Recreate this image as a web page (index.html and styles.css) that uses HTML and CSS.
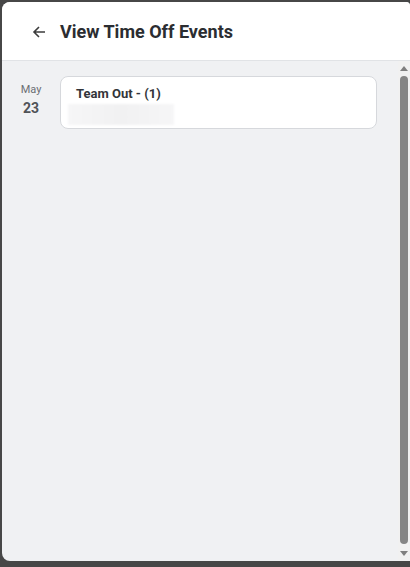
FILE: index.html
```html
<!DOCTYPE html>
<html>
<head>
<meta charset="utf-8">
<link rel="stylesheet" href="styles.css">
</head>
<body>
<div class="panel">
  <header class="header">
    <svg class="back" width="16" height="16" viewBox="0 0 16 16"><path d="M14 8H3M8 3L3 8l5 5" fill="none" stroke="#3c3c3c" stroke-width="1.6"/></svg>
    <h1 class="title">View Time Off Events</h1>
  </header>
  <div class="body">
    <div class="content">
      <div class="row">
        <div class="date">
          <div class="month">May</div>
          <div class="day">23</div>
        </div>
        <div class="card">
          <div class="card-title">Team Out - (1)</div>
          <div class="blur"></div>
        </div>
      </div>
    </div>
    <div class="scrollbar">
      <div class="arrow up"></div>
      <div class="thumb"></div>
      <div class="arrow down"></div>
    </div>
  </div>
</div>
</body>
</html>
```
FILE: styles.css
```css
html, body { margin: 0; padding: 0; }
body {
  width: 410px;
  height: 567px;
  background: #474747;
  font-family: Roboto, "Liberation Sans", sans-serif;
  overflow: hidden;
}
.panel {
  margin: 2px 0 0 2px;
  width: 408px;
  height: 559px;
  border-radius: 8px 4px 0 8px;
  overflow: hidden;
  display: flex;
  flex-direction: column;
  background: #f0f1f3;
}
.header {
  flex: none;
  background: #fff;
  border-bottom: 1px solid #e1e3e6;
  display: flex;
  align-items: center;
  padding-left: 29px;
  box-sizing: border-box;
  height: 59px;
}
.back { flex: none; margin-top: 1px; }
.title {
  margin: 0 0 0 13px;
  font-size: 18px;
  font-weight: 700;
  color: #2b2d31;
  letter-spacing: 0;
}
.body {
  flex: 1;
  display: flex;
}
.content {
  flex: 1;
  padding: 15px 21px 0 0;
}
.row { display: flex; }
.date {
  width: 58px;
  flex: none;
  text-align: center;
  padding-top: 7px;
}
.month {
  font-size: 11px;
  color: #6b6e73;
  line-height: 13px;
}
.day {
  font-size: 14px;
  font-weight: 700;
  color: #505357;
  line-height: 18px;
  margin-top: 3px;
}
.card {
  flex: 1;
  height: 53px;
  box-sizing: border-box;
  background: #fff;
  border: 1px solid #d6d8dc;
  border-radius: 8px;
  padding: 9px 0 0 15px;
}
.card-title {
  font-size: 13px;
  font-weight: 700;
  color: #333539;
  line-height: 15px;
}
.blur {
  margin: 3px 0 0 -8px;
  width: 106px;
  height: 21px;
  background: linear-gradient(90deg, #f6f6f7, #f1f1f2 50%, #f6f6f7);
  filter: blur(1px);
}
.scrollbar {
  width: 12px;
  flex: none;
  background: #f1f1f1;
  display: flex;
  flex-direction: column;
  align-items: center;
}
.arrow {
  width: 0; height: 0;
  border-left: 4px solid transparent;
  border-right: 4px solid transparent;
  margin: 5px 0;
}
.up { border-bottom: 5px solid #7f7f7f; }
.down { border-top: 5px solid #7f7f7f; }
.thumb {
  flex: 1;
  width: 8px;
  background: #858585;
  border-radius: 4px;
  margin: 0 0 2px;
}
```
